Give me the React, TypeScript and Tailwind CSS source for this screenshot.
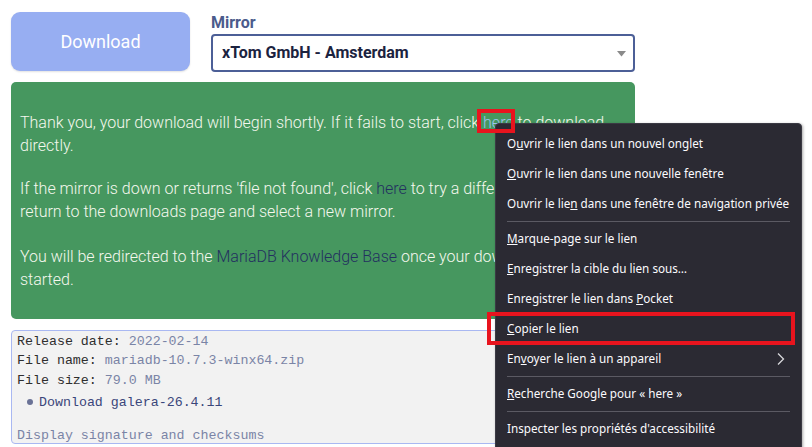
import React from "react";

function MenuItem({ children, chevron }: { children: React.ReactNode; chevron?: boolean }) {
  return (
    <div className="relative h-[30px] flex items-center pl-[11px] pr-[20px] whitespace-nowrap">
      <span>{children}</span>
      {chevron && (
        <svg className="absolute right-[15px] top-[8px]" width="10" height="14" viewBox="0 0 10 14">
          <path d="M2 1.5 L7.5 7 L2 12.5" fill="none" stroke="#d8d8dc" strokeWidth="1.3" />
        </svg>
      )}
    </div>
  );
}

function Sep() {
  return (
    <div className="h-[5px] flex items-center px-[11px]">
      <div className="h-px w-full bg-[#5b5a63]" />
    </div>
  );
}

export default function App() {
  return (
    <div className="relative w-[812px] h-[447px] overflow-hidden bg-white font-['Roboto',sans-serif]">
      <div className="ml-[11px] w-[624px] pt-[12px] flex flex-col">
        <div className="flex gap-[21px]">
          <button className="w-[179px] h-[59px] rounded-[9px] bg-[#97aef2] text-white text-[18px] flex items-center justify-center shadow-[0_1px_2px_rgba(0,0,0,0.12)]">
            Download
          </button>
          <div className="flex-1 flex flex-col">
            <div className="h-[22px] leading-[22px] text-[16px] font-bold text-[#4b5b8c]">Mirror</div>
            <div className="relative h-[38px] border-2 border-[#4c5f97] rounded-[4px] flex items-center pl-[9px]">
              <span className="text-[16px] font-bold text-[#1b2340]">xTom GmbH - Amsterdam</span>
              <svg className="absolute right-[7px] top-[15px]" width="9" height="6" viewBox="0 0 9 6">
                <path d="M0 0 L9 0 L4.5 5.5 Z" fill="#8a8a8a" />
              </svg>
            </div>
          </div>
        </div>

        <div className="mt-[10px] h-[237px] rounded-[5px] bg-[#46975f] px-[9px] pt-[29px] overflow-hidden text-[16px] leading-[23px] text-[#f5f8ee] font-light whitespace-nowrap">
          <p>
            Thank you, your download will begin shortly. If it fails to start, click{" "}
            <span className="text-[#9cc4f0]">here</span> to download
            <br />
            directly.
          </p>
          <p className="mt-[20px]">
            If the mirror is down or returns 'file not found', click{" "}
            <span className="text-[#233060]">here</span> to try a different mirror, or
            <br />
            return to the downloads page and select a new mirror.
          </p>
          <p className="mt-[22px]">
            You will be redirected to the <span className="text-[#233060]">MariaDB Knowledge Base</span> once your download has
            <br />
            started.
          </p>
        </div>

        <div className="mt-[11px] h-[114px] rounded-[4px] border border-[#a9b8f2] bg-[#f2f2f2] pl-[5px] pt-[0.5px] font-['Liberation_Mono',monospace] text-[13.3px] leading-[19.5px] whitespace-nowrap overflow-hidden">
          <div>
            <span className="text-[#2e2e2e]">Release date:</span> <span className="text-[#7a84a6]">2022-02-14</span>
          </div>
          <div>
            <span className="text-[#2e2e2e]">File name:</span> <span className="text-[#7a84a6]">mariadb-10.7.3-winx64.zip</span>
          </div>
          <div>
            <span className="text-[#2e2e2e]">File size:</span> <span className="text-[#7a84a6]">79.0 MB</span>
          </div>
          <div className="mt-[2.5px] flex items-center pl-[10px] text-[#3a467a]">
            <span className="w-[6px] h-[6px] rounded-full bg-[#6a7296] mr-[6px]" />
            <span>Download galera-26.4.11</span>
          </div>
          <div className="mt-[13.5px] text-[#7a84a6]">Display signature and checksums</div>
        </div>
      </div>

      {/* context menu */}
      <div className="absolute left-[495px] top-[123px] w-[307px] h-[340px] rounded-[4px] bg-[#2b2a33] border border-[#3b3a44] shadow-[1px_1px_3px_rgba(0,0,0,0.35)] pt-[5px] text-[#fbfbfe] text-[11.7px] font-['Noto_Sans',sans-serif]">
        <MenuItem>
          O<u>u</u>vrir le lien dans un nouvel onglet
        </MenuItem>
        <MenuItem>
          <u>O</u>uvrir le lien dans une nouvelle fenêtre
        </MenuItem>
        <MenuItem>
          Ouvrir le lie<u>n</u> dans une fenêtre de navigation privée
        </MenuItem>
        <Sep />
        <MenuItem>
          <u>M</u>arque-page sur le lien
        </MenuItem>
        <MenuItem>
          <u>E</u>nregistrer la cible du lien sous…
        </MenuItem>
        <MenuItem>
          Enregistrer le lien dans <u>P</u>ocket
        </MenuItem>
        <MenuItem>
          <u>C</u>opier le lien
        </MenuItem>
        <MenuItem chevron>
          En<u>v</u>oyer le lien à un appareil
        </MenuItem>
        <Sep />
        <MenuItem>
          <u>R</u>echerche Google pour « here »
        </MenuItem>
        <Sep />
        <MenuItem>Inspecter les propriétés d'accessibilité</MenuItem>
      </div>

      {/* red highlight boxes */}
      <div className="absolute left-[477px] top-[109px] w-[38px] h-[24px] border-[4px] border-[#e8141e]" />
      <div className="absolute left-[487px] top-[312px] w-[308px] h-[33px] border-[4px] border-[#e8141e]" />
    </div>
  );
}
